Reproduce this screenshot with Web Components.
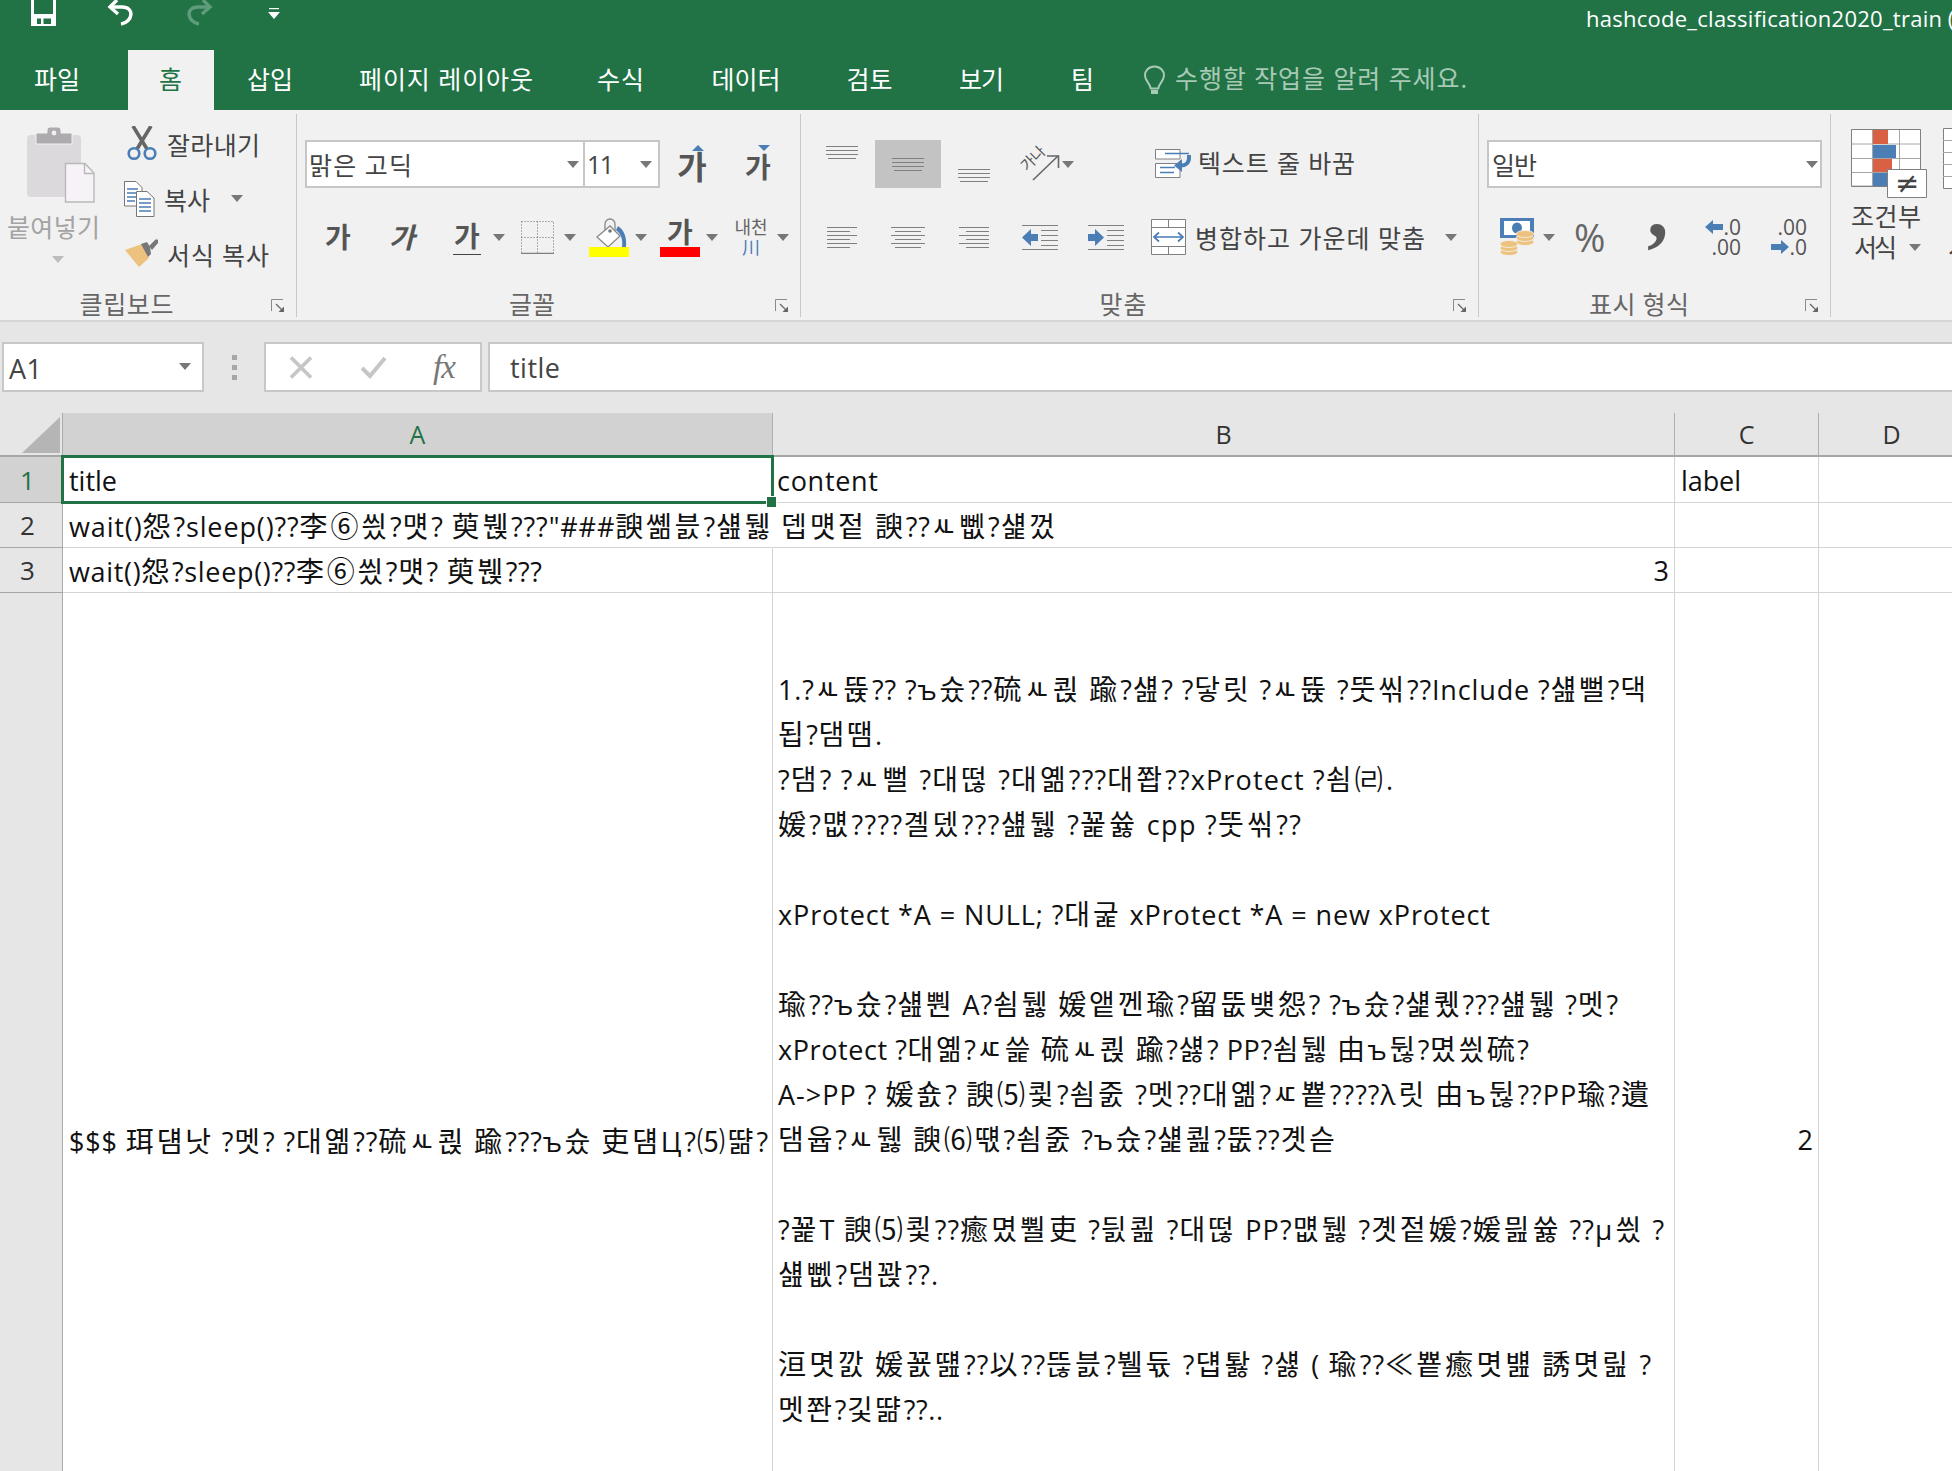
<!DOCTYPE html>
<html lang="ko">
<head>
<meta charset="utf-8">
<title>hashcode_classification2020_train</title>
<style>
html,body{margin:0;padding:0;height:1471px;overflow:hidden;background:#fff}
</style>
</head>
<body>
<xl-app></xl-app>
<script>
const FONT = '"Open Sans","Noto Sans CJK KR",sans-serif';

class XlFit extends HTMLElement {
  constructor(){
    super();
    this.attachShadow({mode:'open'}).innerHTML = '<style>:host{display:inline-block;white-space:pre}</style><slot></slot>';
  }
  connectedCallback(){
    const w = parseFloat(this.getAttribute('w'));
    if(!w) return;
    const r = document.createRange();
    r.selectNodeContents(this);
    const m = r.getBoundingClientRect().width;
    const n = [...this.textContent].length;
    if(n > 1 && m > 0){
      const ls = ((w - m) / (n - 1)).toFixed(3) + 'px';
      this.style.letterSpacing = ls;
      this.style.setProperty('--ls', ls);
    }
    this.style.width = w + 'px';
  }
}
customElements.define('xl-fit', XlFit);

class XlDrop extends HTMLElement {
  constructor(){
    super();
    this.attachShadow({mode:'open'}).innerHTML = `<style>
      :host{display:inline-block;width:0;height:0;flex:none;
        border-left:6px solid transparent;border-right:6px solid transparent;border-top:7px solid var(--drop,#777)}
    </style>`;
  }
}
customElements.define('xl-drop', XlDrop);

class XlLauncher extends HTMLElement {
  constructor(){
    super();
    this.attachShadow({mode:'open'}).innerHTML = `<style>:host{display:block;width:13px;height:13px;flex:none}svg{display:block}</style>
    <svg width="13" height="13" viewBox="0 0 13 13"><path d="M.5 12V.5H12" fill="none" stroke="#8a8a8a"/><path d="M5 5l6 6" stroke="#666" stroke-width="1.2"/><path d="M13 13H7.5L13 7.5Z" fill="#666"/></svg>`;
  }
}
customElements.define('xl-launcher', XlLauncher);

class XlGroup extends HTMLElement {
  constructor(){
    super();
    this.attachShadow({mode:'open'}).innerHTML = `<style>
      :host{display:flex;flex-direction:column;flex:none;box-sizing:border-box;height:203px;margin-top:4px;border-right:1px solid #c8c8c8;color:#444}
      .body{height:172px;flex:none}
      .foot{height:31px;display:flex;align-items:flex-start;padding-top:6px;box-sizing:border-box}
      .lab{flex:1;text-align:center;font-size:25px;line-height:25px;color:#666;padding-right:10px}
      xl-launcher{margin:7px 12px 0 8px}
    </style>
    <div class="body"><slot></slot></div>
    <div class="foot"><div class="lab"><slot name="label"></slot></div><xl-launcher></xl-launcher></div>`;
  }
}
customElements.define('xl-group', XlGroup);

class XlTitlebar extends HTMLElement {
  constructor(){
    super();
    this.attachShadow({mode:'open'}).innerHTML = `<style>
      :host{display:flex;height:50px;background:#217346;color:#fff;overflow:hidden;align-items:flex-start;white-space:nowrap}
      svg{display:block;flex:none}
      .title{font-size:22px;line-height:30px;margin:3px 0 0 1306px;flex:none}
    </style>
    <svg style="margin-left:31px" width="26" height="26" viewBox="0 0 26 26"><path d="M0 0H25V26H0Z" fill="#fff"/><path d="M3 0H22V14H3Z" fill="#217346"/><path d="M6 17H20V24H6Z" fill="#217346"/><path d="M10 18H12.500V24H10ZM6 17H20V18.500H6Z" fill="#fff"/></svg>
    <svg style="margin-left:50px" width="28" height="26" viewBox="0 0 28 26"><path d="M10 0L3 7l8 7" fill="none" stroke="#fff" stroke-width="3.4"/><path d="M4 7H15C28 7 26 22 14 24" fill="none" stroke="#fff" stroke-width="3.4"/></svg>
    <svg style="margin-left:50px" width="28" height="26" viewBox="0 0 28 26"><path d="M18 0L25 7l-8 7" fill="none" stroke="#5f9c7c" stroke-width="3.4"/><path d="M24 7H13C0 7 2 22 14 24" fill="none" stroke="#5f9c7c" stroke-width="3.4"/></svg>
    <svg style="margin-left:55px;margin-top:8px" width="12" height="11" viewBox="0 0 12 11"><path d="M1 .5H11" stroke="#fff" stroke-width="1.4"/><path d="M0 4H12L6 11Z" fill="#fff"/></svg>
    <div class="title"><xl-fit w="356">hashcode_classification2020_train</xl-fit> (1) - Excel</div>`;
  }
}
customElements.define('xl-titlebar', XlTitlebar);

class XlTabs extends HTMLElement {
  constructor(){
    super();
    const tabs = [['파일',128,46,14,0],['홈',86,22,2,0],['삽입',112,46,0,0],['페이지 레이아웃',240,174,0,0],['수식',109,47,0,0],['데이터',138,69,0,4],['검토',113,46,0,0],['보기',111,45,0,0],['팀',90,20,2,0]];
    this.attachShadow({mode:'open'}).innerHTML = `<style>
      :host{display:flex;height:60px;background:#217346;color:#fff;font-size:25px;align-items:stretch;white-space:nowrap}
      .t{display:flex;align-items:center;justify-content:center;box-sizing:border-box;flex:none;line-height:54px;padding-bottom:2px}
      .on{background:#f1f1f1;color:#217346}
      svg{display:block;margin:15px 9px 0 16px;flex:none}
      .hint{color:#a8c9b5;line-height:56px}
    </style>
    ${tabs.map(([n,w,tw,pr,pl],i)=>`<div class="t${i==1?' on':''}" style="width:${w}px;padding-right:${pr}px;padding-left:${pl}px"><xl-fit w="${tw}">${n}</xl-fit></div>`).join('')}
    <svg width="23" height="30" viewBox="0 0 23 30"><path d="M11.500 1.500C5.500 1.500 2 6 2 10.500 2 16 7 18 7.800 23.500H15.200C16 18 21 16 21 10.500 21 6 17.500 1.500 11.500 1.500Z" fill="none" stroke="#a8c9b5" stroke-width="2"/><path d="M8 25H15V29H8Z" fill="#a8c9b5"/></svg>
    <div class="hint"><xl-fit w="292">수행할 작업을 알려 주세요.</xl-fit></div>`;
  }
}
customElements.define('xl-tabs', XlTabs);

function lines(w, rows, gap){
  const h = (rows.length - 1) * gap + 1;
  return `<svg width="${w}" height="${h}" viewBox="0 0 ${w} ${h}">` +
    rows.map((r,i)=>`<path d="M${r[0]} ${i*gap+.5}H${r[1]}" stroke="#808080"/>`).join('') + '</svg>';
}
const TOP = [[0,32],[0,32],[0,32],[2,30]];

class XlRibbon extends HTMLElement {
  constructor(){
    super();
    this.attachShadow({mode:'open'}).innerHTML = `<style>
      :host{display:flex;height:212px;box-sizing:border-box;background:#f1f1f1;border-bottom:2px solid #d6d6d6;font-size:25px;color:#444;overflow:hidden;white-space:nowrap}
      svg{display:block;flex:none}
      .row{display:flex;align-items:center}
      .rows{display:flex;flex-direction:column;padding-top:26px;gap:29px}
      .r1{height:48px}.r2{height:40px}
      .clip{display:flex}
      .paste{width:124px;flex:none;display:flex;flex-direction:column;color:#a3a3a3}
      .paste svg{margin:13px 0 0 27px}
      .paste .tx{margin:11px 0 0 7px;line-height:26px}
      .paste xl-drop{--drop:#bdbdbd;margin:16px 0 0 52px;align-self:flex-start}
      .list{display:flex;flex-direction:column;padding-top:2px}
      .list .row{height:55px}
      .ic{width:43px;flex:none}
      .combo{display:flex;align-items:center;box-sizing:border-box;height:48px;background:#fff;border:2px solid #c6c6c6;padding-left:2px;flex:none}
      .combo xl-drop{margin-left:auto;margin-right:4px}
      .g{font-weight:700;color:#555;line-height:30px;flex:none;text-align:center}
      .up{display:flex;flex-direction:column;align-items:center;flex:none}
      .cr{display:flex;flex-direction:column;flex:none;width:40px}
      .bar{height:10px;flex:none}
      .tri{width:0;height:0;border-left:6px solid transparent;border-right:6px solid transparent}
      .hl{width:66px;height:48px;background:#c3c3c3;display:flex;align-items:center;justify-content:center;flex:none}
      .dec{display:flex;flex-direction:column;align-items:flex-end;width:36px;flex:none;font-size:21px;line-height:20px;color:#555}
      .dec div{display:flex;align-items:center;height:20px}
      .jc{display:flex;flex-direction:column;align-items:center;font-size:18px;line-height:20px;color:#666;width:34px;flex:none}
      .cond{display:flex}
      .cc{display:flex;flex-direction:column;flex:none}
      .cc .lb{line-height:31px;display:flex;align-items:center}
    </style>

    <xl-group style="width:297px">
      <div class="clip">
        <div class="paste">
          <svg width="68" height="76" viewBox="0 0 68 76"><path d="M4 8H50a4 4 0 0 1 4 4V66a4 4 0 0 1-4 4H4a4 4 0 0 1-4-4V12a4 4 0 0 1 4-4Z" fill="#dcd9dc"/><path d="M9 6H20V3a3 3 0 0 1 3-3h8a3 3 0 0 1 3 3V6H45V17H9Z" fill="#aeabae" stroke="#f1f1f1"/><circle cx="27" cy="6" r="2.4" fill="#f1f1f1"/><path d="M38.500 36.500H58L67 46V75H38.500Z" fill="#f6f2f8" stroke="#b9b9b9" stroke-width="1.400"/><path d="M57.500 37V46.500H67" fill="none" stroke="#b9b9b9" stroke-width="1.400"/></svg>
          <div class="tx"><xl-fit w="93">붙여넣기</xl-fit></div>
          <xl-drop></xl-drop>
        </div>
        <div class="list">
          <div class="row"><div class="ic"><svg style="margin-left:3px" width="30" height="35" viewBox="0 0 30 35"><path d="M6 0L20 23M24 0L10 23" stroke="#666" stroke-width="3.6"/><circle cx="7" cy="27.500" r="5.300" fill="none" stroke="#4a7eb5" stroke-width="2.600"/><circle cx="23" cy="27.500" r="5.300" fill="none" stroke="#4a7eb5" stroke-width="2.600"/></svg></div><xl-fit w="93">잘라내기</xl-fit></div>
          <div class="row"><div class="ic" style="width:40px"><svg width="31" height="36" viewBox="0 0 31 36"><path d="M.5.500H12L18 6.500V25H.5Z" fill="#fff" stroke="#777"/><path d="M3 8H14M3 12H14M3 16H14M3 20H11" stroke="#4a7eb5" stroke-width="1.400"/><path d="M12.500 10.500H23L30 17V35.500H12.500Z" fill="#fff" stroke="#777"/><path d="M15 18H27M15 22H27M15 26H27M15 30H27" stroke="#4a7eb5" stroke-width="1.400"/></svg></div><xl-fit w="46">복사</xl-fit><xl-drop style="margin-left:21px"></xl-drop></div>
          <div class="row"><div class="ic"><svg style="margin-left:1px" width="33" height="29" viewBox="0 0 33 29"><path d="M0 11L17 5 24 19 14 28Z" fill="#edc27f"/><path d="M16 5l6-2 3 5 1 7-3 3Z" fill="#777"/><path d="M24 7L30 1a2 2 0 0 1 3 3L27 11Z" fill="#777"/></svg></div><xl-fit w="102">서식 복사</xl-fit></div>
        </div>
      </div>
      <span slot="label"><xl-fit w="94">클립보드</xl-fit></span>
    </xl-group>

    <xl-group style="width:504px">
      <div class="rows" style="padding-left:8px">
        <div class="row r1">
          <div class="combo" style="width:280px"><xl-fit w="103">맑은 고딕</xl-fit><xl-drop></xl-drop></div>
          <div class="combo" style="width:77px;margin-left:-2px;padding-left:2px"><xl-fit w="27" style="font-size:25px;font-family:'Open Sans'">11</xl-fit><xl-drop style="margin-right:6px"></xl-drop></div>
          <div class="up" style="margin-left:16px;width:32px"><div class="tri" style="border-bottom:6px solid #4a7eb5;margin-left:12px"></div><div class="g" style="font-size:32px;line-height:32px;height:32px">가</div></div>
          <div class="up" style="margin-left:36px;width:28px"><div class="tri" style="border-top:6px solid #4a7eb5;margin-left:12px"></div><div class="g" style="font-size:28px;line-height:32px;height:32px">가</div></div>
        </div>
        <div class="row r2">
          <div class="g" style="margin-left:19px;font-size:28px;width:28px">가</div>
          <div class="g" style="margin-left:36px;font-size:28px;width:28px;font-style:italic">가</div>
          <div class="g" style="margin-left:37px;font-size:28px;width:28px;border-bottom:1px solid #444;line-height:33px;height:34px">가</div>
          <xl-drop style="margin-left:12px"></xl-drop>
          <svg style="margin-left:16px" width="33" height="33" viewBox="0 0 33 33"><path d="M.5.500H32.500V32M.5.500V32M.5 16.500H32.500M16.500.500V32" fill="none" stroke="#666" stroke-dasharray="1 2"/><path d="M0 32.500H33" stroke="#808080" stroke-width="1.400"/></svg>
          <xl-drop style="margin-left:10px"></xl-drop>
          <div class="cr" style="margin-left:13px;height:39px"><svg width="40" height="29" viewBox="0 0 40 29"><path d="M8 19L21 8 31 18 19 29Z" fill="#fff" stroke="#8a8a8a" stroke-width="1.300"/><path d="M16 12V6a5 5 0 0 1 10 0V13" fill="none" stroke="#8a8a8a" stroke-width="1.300"/><circle cx="21" cy="13" r="1.800" fill="#777"/><path d="M29 8c6 4 9 11 8 21H33c1-8-1-13-6-17Z" fill="#4a7eb5"/></svg><div class="bar" style="background:#ff0"></div></div>
          <xl-drop style="margin-left:6px"></xl-drop>
          <div class="cr" style="margin-left:13px;height:39px"><div class="g" style="font-size:28px;height:29px;line-height:28px">가</div><div class="bar" style="background:#f00"></div></div>
          <xl-drop style="margin-left:6px"></xl-drop>
          <div class="jc" style="margin-left:16px"><span>내천</span><span style="color:#4a7eb5">川</span></div>
          <xl-drop style="margin-left:9px"></xl-drop>
        </div>
      </div>
      <span slot="label" style="padding-left:10px"><xl-fit w="46">글꼴</xl-fit></span>
    </xl-group>

    <xl-group style="width:678px">
      <div class="rows">
        <div class="row r1" style="align-items:flex-start">
          <div style="margin:6px 0 0 25px">${lines(32,TOP,4)}</div>
          <div class="hl" style="margin-left:17px">${lines(32,TOP,4)}</div>
          <div style="margin:29px 0 0 17px">${lines(32,TOP,4)}</div>
          <svg style="margin:5px 0 0 30px" width="42" height="38" viewBox="0 0 42 38"><text transform="translate(7 27) rotate(-45)" font-family="Noto Sans CJK KR" font-size="15" fill="#555">가나</text><path d="M13 35L38 11" stroke="#666" stroke-width="1.600"/><path d="M27 11H38.500V23" fill="none" stroke="#666" stroke-width="1.600"/></svg>
          <xl-drop style="margin:21px 0 0 0"></xl-drop>
          <svg style="margin:9px 0 0 81px" width="37" height="29" viewBox="0 0 37 29"><path d="M.5.500H25V10H.5ZM.5 14.500H25V28.500H.5Z" fill="#fff" stroke="#808080"/><path d="M10 4.500H34M5 18.500H20M5 23.500H19" stroke="#4a7eb5" stroke-width="1.300"/><path d="M34 6V9C34 14 30 16.500 26 16.500" fill="none" stroke="#4a7eb5" stroke-width="4"/><path d="M19 16.500L27 10V23Z" fill="#4a7eb5"/></svg>
          <div style="margin:6px 0 0 6px;line-height:34px"><xl-fit w="157">텍스트 줄 바꿈</xl-fit></div>
        </div>
        <div class="row r2">
          <div style="margin-left:26px">${lines(30,[[0,30],[0,23],[0,30],[0,23],[0,30],[0,23]],4)}</div>
          <div style="margin-left:34px">${lines(34,[[0,34],[4,30],[0,34],[4,30],[0,34],[4,30]],4)}</div>
          <div style="margin-left:34px">${lines(30,[[0,30],[7,30],[0,30],[7,30],[0,30],[7,30]],4)}</div>
          <svg style="margin-left:33px" width="36" height="25" viewBox="0 0 36 25"><path d="M0 .5H36M19 5.500H36M19 10.500H36M19 15.500H36M19 20.500H36M0 24.500H36" stroke="#808080"/><path d="M0 12.500L9 4V9H16V16H9V21Z" fill="#4a7eb5"/></svg>
          <svg style="margin-left:30px" width="36" height="25" viewBox="0 0 36 25"><path d="M0 .5H36M19 5.500H36M19 10.500H36M19 15.500H36M19 20.500H36M0 24.500H36" stroke="#808080"/><path d="M16 12.500L7 4V9H0V16H7V21Z" fill="#4a7eb5"/></svg>
          <svg style="margin-left:27px" width="35" height="36" viewBox="0 0 35 36"><path d="M.5.500H34.500V35.500H.5Z" fill="#fff" stroke="#808080"/><path d="M0 8.500H35M0 27.500H35M17.500 0V8M17.500 28V36" stroke="#808080"/><path d="M3 18H32M8 13.500L3 18 8 22.500M27 13.500L32 18 27 22.500" fill="none" stroke="#4a7eb5" stroke-width="1.700"/></svg>
          <xl-fit w="230" style="margin-left:9px">병합하고 가운데 맞춤</xl-fit>
          <xl-drop style="margin-left:20px"></xl-drop>
        </div>
      </div>
      <span slot="label" style="padding-left:10px"><xl-fit w="47">맞춤</xl-fit></span>
    </xl-group>

    <xl-group style="width:352px">
      <div class="rows">
        <div class="row r1"><div class="combo" style="width:335px;margin-left:8px;padding-left:3px"><xl-fit w="45">일반</xl-fit><xl-drop style="margin-right:2px"></xl-drop></div></div>
        <div class="row r2">
          <svg style="margin-left:21px" width="35" height="38" viewBox="0 0 35 38"><path d="M0 0H34V20H0Z" fill="#4a7eb5"/><path d="M4 3H30V17H4Z" fill="#fff"/><ellipse cx="17" cy="10" rx="5" ry="5.500" fill="#4a7eb5"/><g fill="#edc27f" stroke="#f1f1f1" stroke-width=".8"><ellipse cx="25" cy="24" rx="9" ry="3.500"/><ellipse cx="25" cy="20" rx="9" ry="3.500"/><ellipse cx="25" cy="16" rx="9" ry="3.500"/><ellipse cx="9" cy="34" rx="9" ry="3.500"/><ellipse cx="9" cy="30" rx="9" ry="3.500"/><ellipse cx="9" cy="26" rx="9" ry="3.500"/></g></svg>
          <xl-drop style="margin-left:8px"></xl-drop>
          <div style="margin-left:19px;width:31px;flex:none;font-size:38px;line-height:40px;color:#666;font-family:'Open Sans'">%</div>
          <div style="margin-left:44px;width:15px;flex:none;font-size:86px;line-height:40px;color:#5a5a5a;font-weight:700;font-family:'Liberation Serif';transform:translate(-2px,-29px)">,</div>
          <div class="dec" style="margin-left:41px"><div><svg width="18" height="14" viewBox="0 0 18 14"><path d="M0 7L8 0V4H18V10H8V14Z" fill="#4a7eb5"/></svg><span>.0</span></div><div>.00</div></div>
          <div class="dec" style="margin-left:30px"><div>.00</div><div><svg width="18" height="14" viewBox="0 0 18 14"><path d="M18 7L10 0V4H0V10H10V14Z" fill="#4a7eb5"/></svg><span>.0</span></div></div>
        </div>
      </div>
      <span slot="label" style="padding-left:12px"><xl-fit w="100">표시 형식</xl-fit></span>
    </xl-group>

    <div class="cond">
      <div class="cc" style="margin:19px 0 0 20px;width:92px">
        <svg width="76" height="70" viewBox="0 0 76 70"><path d="M.5.500H69.500V57H.5ZM.5 15H70M.5 29.500H70M.5 43.500H70M21.500 0V57M48.500 0V57" fill="#fff" stroke="#a6a6a6"/><path d="M.5.500H69.500V57.500H.5Z" fill="none" stroke="#808080"/><path d="M22 1H37V15H22ZM22 30H41V43H22Z" fill="#d96042"/><path d="M22 16H45V29H22ZM22 44H37V57H22Z" fill="#4a7eb5"/><path d="M36.500 40.500H75.500V68.500H36.500Z" fill="#fff" stroke="#808080"/><text x="44" y="64" font-family="DejaVu Sans" font-size="29" fill="#444">≠</text></svg>
        <div class="lb" style="margin-top:2px"><xl-fit w="70">조건부</xl-fit></div>
        <div class="lb" style="padding-left:3px"><xl-fit w="43">서식</xl-fit><xl-drop style="margin-left:12px"></xl-drop></div>
      </div>
      <div class="cc" style="margin:18px 0 0 0;width:60px">
        <svg width="60" height="61" viewBox="0 0 60 61"><path d="M.5.500H60V60.500H.5Z" fill="#fff" stroke="#808080"/><path d="M0 12.500H60M0 24.500H60M0 36.500H60M0 48.500H60" stroke="#a6a6a6"/></svg>
        <div class="lb" style="margin-top:12px;visibility:hidden">표</div>
        <div class="lb" style="padding-left:5px">서식</div>
      </div>
    </div>`;
  }
}
customElements.define('xl-ribbon', XlRibbon);

class XlFormula extends HTMLElement {
  constructor(){
    super();
    this.attachShadow({mode:'open'}).innerHTML = `<style>
      :host{display:flex;height:91px;box-sizing:border-box;padding-top:20px;background:#e6e6e6;color:#444;font-size:27px;white-space:nowrap}
      .box{height:50px;box-sizing:border-box;background:#fff;border:2px solid #c8c8c8;display:flex;align-items:center;flex:none}
      .grip{width:60px;flex:none;display:flex;flex-direction:column;align-items:center;justify-content:center;gap:5px;height:50px}
      .grip i{display:block;width:5px;height:5px;background:#a6a6a6}
      svg{display:block;flex:none}
      .fx{font-family:"Liberation Serif",serif;font-style:italic;font-size:33px;color:#777;line-height:46px;letter-spacing:-1px}
    </style>
    <div class="box" style="width:202px;margin-left:2px;padding-left:5px;padding-top:3px"><xl-fit w="33">A1</xl-fit><xl-drop style="margin-left:auto;margin-right:11px;margin-top:-5px;--drop:#777"></xl-drop></div>
    <div class="grip"><i></i><i></i><i></i></div>
    <div class="box" style="width:218px;padding-left:23px">
      <svg width="24" height="23" viewBox="0 0 24 23"><path d="M2 1.500L22 21.500M22 1.500L2 21.500" stroke="#c6c6c6" stroke-width="3.800"/></svg>
      <svg style="margin-left:47px" width="27" height="23" viewBox="0 0 27 23"><path d="M2 12L10 20 25 2" fill="none" stroke="#c6c6c6" stroke-width="4"/></svg>
      <span class="fx" style="margin-left:46px">fx</span>
    </div>
    <div class="box" style="flex:1;margin-left:6px;padding-left:20px;border-right:none"><xl-fit w="50">title</xl-fit></div>`;
  }
}
customElements.define('xl-formula', XlFormula);

class XlSheet extends HTMLElement {
  constructor(){
    super();
    this.attachShadow({mode:'open'});
  }
  connectedCallback(){
    const W = s => s.replace(/[^\x00-\x7f]+/g, m => `<b>${m}</b>`);
    const bLines = [
      ['',0],
      ['1.?ㅻ뜑?? ?ъ슜??硫ㅻ쾭 踰?섎? ?닿릿 ?ㅻ뜑 ?뚯씪??Include ?섎뻘?댁',870],
      ['됩?댐땜.',104],
      ['?댐? ?ㅻ뻘 ?대떦 ?대옒???대쫩??xProtect ?쇰㈃.',615],
      ['媛?먮????곌뎄???섎뒗 ?꾩쓣 cpp ?뚯씪??',523],
      ['',0],
      ['xProtect *A = NULL; ?대굹 xProtect *A = new xProtect',712],
      ['',0],
      ['瑜??ъ슜?섎뿬 A?쇰뒗 媛앹껜瑜?留뚮뱾怨? ?ъ슜?섍퀬???섎뒗 ?멧?',840],
      ['xProtect ?대옒?ㅼ쓽 硫ㅻ쾭 踰?섏? PP?쇰뒗 由ъ뒪?몄씠硫?',751],
      ['A->PP ? 媛숈? 諛⑸쾿?쇰줈 ?멧??대옒?ㅼ뿉????λ릿 由ъ뒪??PP瑜?遺',873],
      ['댐윱?ㅻ뒗 諛⑹떇?쇰줈 ?ъ슜?섍쾶?뚮??곗슫',559],
      ['',0],
      ['?꾩T 諛⑸쾿??癒몄뿰吏 ?딄쾶 ?대떦 PP?먮뒗 ?곗젙媛?媛믪쓣 ??μ씠 ?',886],
      ['섎뻾?댐꽍??.',160],
      ['',0],
      ['洹몃깘 媛꾨떒??以??뜮븘?뷀듃 ?덉퇋 ?섏 ( 瑜??≪뿉癒몃뱶 誘몃릺 ?',873],
      ['멧쫜?깇땲??..',165],
      ['',0],['',0],['',0],['',0],['',0]
    ];
    const a2 = 'wait()怨?sleep()??李⑥씠?먯? 萸붽???"###諛쏆븘?섎뒗 뎁먯젙 諛??ㅻ뻾?섍껐';
    const a3 = 'wait()怨?sleep()??李⑥씠?먯? 萸붽???';
    const a4 = '$$$ 珥덈낫 ?멧? ?대옒??硫ㅻ쾭 踰???ъ슜 吏덈Ц?⑸땲?';
    this.shadowRoot.innerHTML = `<style>
      :host{display:grid;grid-template-columns:63px 710px 902px 144px 146px;grid-template-rows:44px 46px 45px 45px 1094px;color:#111;font-size:27px;white-space:nowrap;background:#fff}
      b{font-weight:400;font-size:28px;letter-spacing:calc(var(--ls,0px) + 2px)}
      .h{background:#e6e6e6;color:#333;display:flex;align-items:center;justify-content:center;box-sizing:border-box}
      .ch{border-right:1px solid #b0b0b0;border-bottom:2px solid #a6a6a6;font-size:25px}
      .rh{border-right:1px solid #ababab;border-bottom:1px solid #a6a6a6;font-size:26px;padding-right:7px}
      .sel{background:#d2d2d2;color:#217346}
      .c{box-sizing:border-box;border-right:1px solid #d4d4d4;border-bottom:1px solid #d4d4d4;display:flex;align-items:center;padding:0 5px 0 6px;min-width:0}
      .c.r{justify-content:flex-end}
      .first{padding-top:2px}
      .corner{background:#e6e6e6;border-bottom:2px solid #a6a6a6;border-right:1px solid #ababab;box-sizing:border-box;display:flex;align-items:flex-end;justify-content:flex-end}
      .corner svg{display:block;margin:0 2px 2px 0}
      .c.a1{position:relative;overflow:visible}
      .cursor{position:absolute;left:-2px;top:-2px;right:-2px;bottom:-2px;border:3px solid #217346;pointer-events:none}
      .handle{position:absolute;right:-6px;bottom:-7px;width:9px;height:10px;background:#217346;border:1px solid #fff}
      .b{flex-direction:column;justify-content:center;align-items:stretch;padding:0}
      .b div{height:45px;line-height:45px;padding-left:5px}
      .noborder{border-right-color:transparent}
    </style>
    <div class="corner"><svg width="38" height="36" viewBox="0 0 38 36"><path d="M38 0V36H0Z" fill="#b5b5b5"/></svg></div>
    <div class="h ch sel">A</div><div class="h ch">B</div><div class="h ch">C</div><div class="h ch">D</div>

    <div class="h rh sel">1</div>
    <div class="c a1 first"><xl-fit w="48">title</xl-fit><div class="cursor"><div class="handle"></div></div></div>
    <div class="c first" style="padding-left:4px"><xl-fit w="101">content</xl-fit></div>
    <div class="c first"><xl-fit w="60">label</xl-fit></div>
    <div class="c"></div>

    <div class="h rh">2</div>
    <div class="c noborder"><xl-fit w="988">${W(a2)}</xl-fit></div>
    <div class="c"></div><div class="c"></div><div class="c"></div>

    <div class="h rh">3</div>
    <div class="c"><xl-fit w="473">${W(a3)}</xl-fit></div>
    <div class="c r">3</div><div class="c"></div><div class="c"></div>

    <div class="h rh"></div>
    <div class="c"><xl-fit w="699">${W(a4)}</xl-fit></div>
    <div class="c b">${bLines.map(([t,w])=>`<div>${t?`<xl-fit w="${w}">${W(t)}</xl-fit>`:'&nbsp;'}</div>`).join('')}</div>
    <div class="c r">2</div>
    <div class="c"></div>`;
  }
}
customElements.define('xl-sheet', XlSheet);

class XlApp extends HTMLElement {
  constructor(){
    super();
    this.attachShadow({mode:'open'}).innerHTML = `<style>
      :host{display:block;width:1952px;height:1471px;overflow:hidden;font-family:${FONT}}
    </style>
    <xl-titlebar></xl-titlebar><xl-tabs></xl-tabs><xl-ribbon></xl-ribbon><xl-formula></xl-formula><xl-sheet></xl-sheet>`;
  }
}
customElements.define('xl-app', XlApp);
</script>
</body>
</html>
